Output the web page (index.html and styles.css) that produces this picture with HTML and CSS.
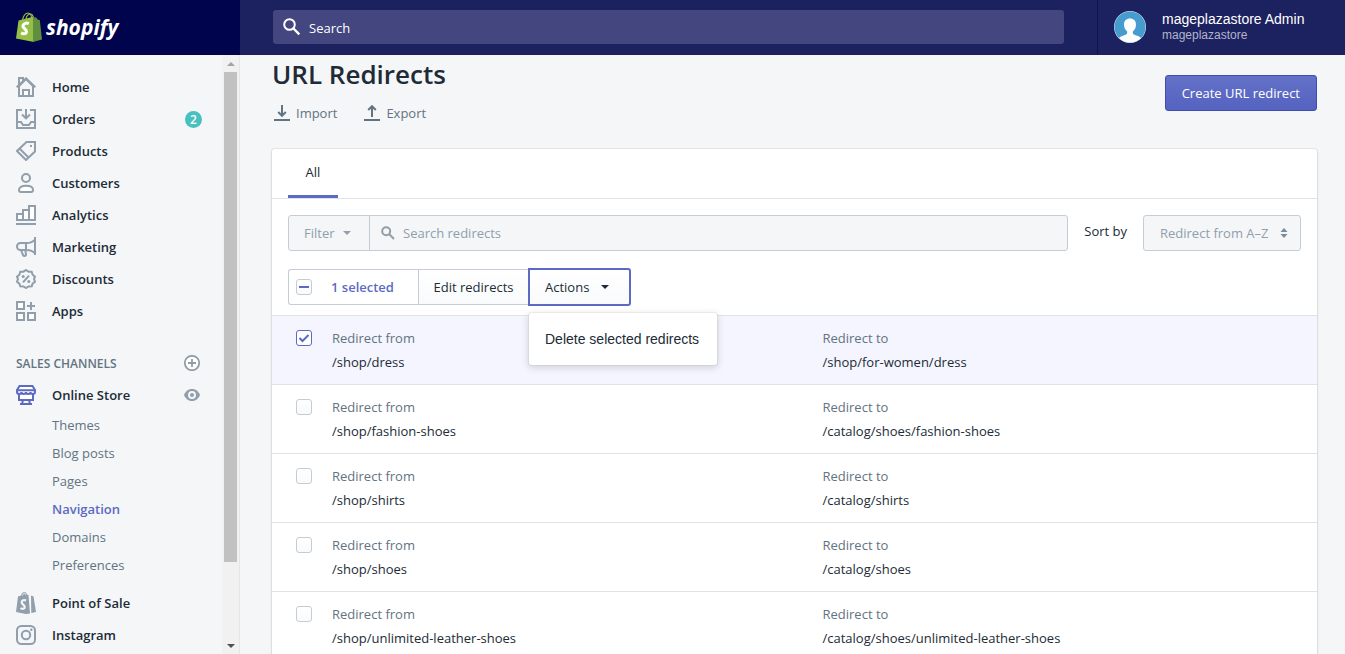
FILE: index.html
```html
<!DOCTYPE html>
<html lang="en">
<head>
<meta charset="utf-8">
<title>URL Redirects</title>
<link rel="stylesheet" href="styles.css">
</head>
<body>
<header class="topbar">
  <a class="brand" href="#">
    <svg class="brand-bag" viewBox="0 0 26 30" width="26" height="30" aria-hidden="true">
      <path d="M6.500 8C7 4 9.500 1 12 1c2.500 0 3.500 2.500 3.800 6M10 7c.5-3 2.500-5 4.500-5 1.500 0 2.500 1.500 3 4" fill="none" stroke="#95bf47" stroke-width="1.200"/>
      <path d="M2.500 8.500L18 4.500V30L0 26.500z" fill="#95bf47"/>
      <path d="M17 5l3 .5 2 2.200 1.800.3L26 27.500 17 30z" fill="#5e8e3e"/>
      <path d="M12.800 11.700c-1-.6-2.200-.8-3.400-.4-2.200.7-3 2.800-1.900 4.200.9 1.300 3 2 3 3.900 0 2.500-3.300 2.900-5.300 1.400" fill="none" stroke="#fff" stroke-width="3"/>
    </svg>
    <span class="brand-name">shopify</span>
  </a>
  <div class="search-wrap">
    <label class="search">
      <svg viewBox="0 0 18 18" width="18" height="18" aria-hidden="true"><g fill="none" stroke="#fff" stroke-width="2"><circle cx="6.500" cy="6.500" r="5.300"/><path d="M10.500 10.500l5.800 5.800" stroke-width="2.400"/></g></svg>
      <input type="search" placeholder="Search" aria-label="Search">
    </label>
  </div>
  <button class="user" type="button">
    <svg class="avatar" viewBox="0 0 32 32" width="32" height="32" aria-hidden="true">
      <defs><clipPath id="disc"><circle cx="16" cy="16" r="15.500"/></clipPath></defs>
      <circle cx="16" cy="16" r="16" fill="#d5e8f5"/>
      <g clip-path="url(#disc)"><path fill="#479ccf" d="M0 0h32v32H0z"/><path fill="#fff" d="M16 7.500c3.600 0 6 2.300 6 6 0 3.200-1.500 5.500-3.200 7-.3 2.300.6 3 3 3.800 2.700.9 4.400 1.600 5.500 3.200L24 32H8l-3.300-4.500c1.100-1.600 2.800-2.300 5.500-3.200 2.400-.8 3.300-1.500 3-3.800-1.700-1.500-3.200-3.800-3.200-7 0-3.700 2.400-6 6-6z"/></g>
    </svg>
    <span class="user-text"><span class="user-name">mageplazastore Admin</span><span class="user-store">mageplazastore</span></span>
  </button>
</header>

<div class="frame">
  <aside class="sidebar">
    <nav class="nav">
      <ul class="nav-list">
        <li><a class="nav-item" href="#"><svg class="icon" viewBox="0 0 20 20"><path d="M3 9L10 2l7 7v10H3z"/><path class="white" d="M7 19v-6h6v6z"/><path d="M.7 10.300L10 1.400l9.300 8.900M3 8V1h4v3"/></svg>Home</a></li>
        <li><a class="nav-item" href="#"><svg class="icon" viewBox="0 0 20 20"><path d="M6 1H1v18h18V1h-5M1 13h4l2 3h6l2-3h4M10 0v9M6 5.500L10 9.300l4-3.800"/></svg>Orders<span class="badge">2</span></a></li>
        <li><a class="nav-item" href="#"><svg class="icon" viewBox="0 0 20 20"><path d="M10.500 1H19v9.500L10 19l-9-9zM3.500 7.500l9 9"/><path class="solid" d="M14 4h2v2h-2z"/></svg>Products</a></li>
        <li><a class="nav-item" href="#"><svg class="icon" viewBox="0 0 20 20"><circle cx="10" cy="5" r="4"/><path class="white" d="M3 17c0-2.800 2.800-4.200 7-4.200s7 1.400 7 4.200c0 1.300-.8 2-2 2H5c-1.200 0-2-.7-2-2z"/></svg>Customers</a></li>
        <li><a class="nav-item" href="#"><svg class="icon" viewBox="0 0 20 20"><path class="white" d="M1 9h6v6H1zM7 5h6v10H7zM13 1h6v14h-6z"/><path d="M0 19h20"/></svg>Analytics</a></li>
        <li><a class="nav-item" href="#"><svg class="icon" viewBox="0 0 20 20"><path d="M19 0v18M19 2.500C17 5 14 6 10.500 6H4.500a3.500 3.500 0 000 7h6c3.500 0 6.500 1 8.500 3.500M10 6v7M5 13l2 5c.3.700.7 1 1.500 1 1 0 1.700-.7 1.500-1.800L9.300 13"/></svg>Marketing</a></li>
        <li><a class="nav-item" href="#"><svg class="icon" viewBox="0 0 20 20"><path d="M10 1l2.600 1.700 3.100.1.900 2.900 2.400 2-1 2.300 1 2.700-2.400 1.900-.9 2.700-3.100.2L10 19l-2.600-1.500-3.100-.2-.9-2.700L1 12.700 2 10 1 7.700l2.400-2 .9-2.900 3.100-.1zM7 13.300L13 6.700"/><circle class="solid" cx="7.200" cy="7.500" r="1.500"/><circle class="solid" cx="12.800" cy="12.500" r="1.500"/></svg>Discounts</a></li>
        <li><a class="nav-item" href="#"><svg class="icon" viewBox="0 0 20 20"><path class="white" d="M1 1h7v7H1zM1 12h7v7H1zM12 12h7v7h-7z"/><path d="M15 1v8M11 5h8"/></svg>Apps</a></li>
      </ul>
      <div class="nav-heading"><h2>SALES CHANNELS</h2>
        <button class="icon-button" type="button" aria-label="Add sales channel"><svg class="icon16" viewBox="0 0 16 16"><circle class="white" cx="8" cy="8" r="7.200"/><path d="M8 4v8M4 8h8"/></svg></button>
      </div>
      <ul class="nav-list">
        <li>
          <div class="nav-row"><a class="nav-item" href="#"><svg class="icon accent" viewBox="0 0 20 20"><path class="white" d="M3 8.500V15h14V8.500"/><path class="white" d="M3.500 1h13L19 5v2c0 1.300-1 2-2.200 2S14.500 8 14.500 7c0 1-1 2-2.200 2S10 8 10 7c0 1-1 2-2.300 2S5.500 8 5.500 7c0 1-1.100 2-2.300 2S1 8.300 1 7V5zM1 5.200h18M7 15l-1 4M13 15l1 4M4 19h12"/></svg>Online Store</a>
          <button class="icon-button" type="button" aria-label="View online store"><svg class="eye" viewBox="0 0 16 12"><path d="M8 0C4 0 1.200 2.700 0 6c1.200 3.300 4 6 8 6s6.800-2.700 8-6c-1.200-3.300-4-6-8-6z" fill="#919eab"/><circle cx="8" cy="6" r="3" fill="#919eab" stroke="#f4f6f8" stroke-width="2"/></svg></button></div>
          <ul class="subnav">
            <li><a href="#">Themes</a></li>
            <li><a href="#">Blog posts</a></li>
            <li><a href="#">Pages</a></li>
            <li><a class="current" href="#" aria-current="page">Navigation</a></li>
            <li><a href="#">Domains</a></li>
            <li><a href="#">Preferences</a></li>
          </ul>
        </li>
        <li><a class="nav-item" href="#"><svg class="icon pos" viewBox="0 0 20 22"><path d="M2 4.500l3-1C5.500 1.500 7 0 8.500 0 9.800 0 10.500 1 11 2.500l1.500.5L14 21.500 10 22 0 20zM15 3.500l2.500 1L20 20l-4.700 1z" fill="#919eab"/><path d="M10 8.500c-2-1-4.300-.3-4.300 1.700 0 2.300 3 2.500 3 4.800 0 2-2.700 2.300-4.200 1" fill="none" stroke="#f4f6f8" stroke-width="2.200"/><path d="M6.300 3.500C7 1.800 8 1.200 8.700 1.200c.6 0 .9.700 1 1.600" fill="none" stroke="#f4f6f8" stroke-width="1"/></svg>Point of Sale</a></li>
        <li><a class="nav-item" href="#"><svg class="icon" viewBox="0 0 20 20"><rect x="1" y="1" width="18" height="18" rx="4.500"/><circle cx="10" cy="10" r="4.200"/><circle class="solid" cx="15.300" cy="4.700" r="1.200"/></svg>Instagram</a></li>
      </ul>
    </nav>
    <div class="scrollbar" aria-hidden="true"><span class="arrow-up"></span><span class="thumb"></span><span class="arrow-down"></span></div>
  </aside>

  <main class="main">
    <div class="page-head">
      <div>
        <h1>URL Redirects</h1>
        <div class="page-links">
          <button type="button"><svg viewBox="0 0 16 16" width="16" height="16"><path d="M8 0v11M4.200 7L8 10.800 11.800 7M0 15h16"/></svg>Import</button>
          <button type="button"><svg viewBox="0 0 16 16" width="16" height="16"><path d="M8 12V1M4.200 5L8 1.200 11.800 5M0 15h16"/></svg>Export</button>
        </div>
      </div>
      <button class="primary" type="button">Create URL redirect</button>
    </div>

    <section class="card">
      <div class="tabs" role="tablist"><button class="tab" type="button" role="tab" aria-selected="true">All</button></div>
      <div class="filters">
        <div class="filter-group">
          <button class="filter" type="button">Filter<span class="caret"></span></button>
          <label class="filter-search">
            <svg viewBox="0 0 14 14" width="14" height="14"><g fill="none" stroke="#919eab" stroke-width="2"><circle cx="5.200" cy="5.200" r="4"/><path d="M8.300 8.300L13 13"/></g></svg>
            <input type="text" placeholder="Search redirects" aria-label="Search redirects">
          </label>
        </div>
        <label class="sort-label" for="sort">Sort by</label>
        <div class="sort"><select id="sort"><option>Redirect from A–Z</option></select><svg viewBox="0 0 8 10" width="8" height="10"><path d="M4 0l3.500 4h-7zM4 10L.5 6h7z" fill="#798c9c"/></svg></div>
      </div>
      <div class="bulk">
        <label class="bulk-count"><span class="check"><input type="checkbox"><svg viewBox="0 0 16 16"><path d="M3 8h10"/></svg></span>1 selected</label>
        <button class="bulk-edit" type="button">Edit redirects</button>
        <div class="actions">
          <button class="actions-button" type="button" aria-expanded="true">Actions<span class="caret"></span></button>
          <div class="menu"><button type="button">Delete selected redirects</button></div>
        </div>
      </div>
      <ul class="rows">
        <li class="row selected"><span class="check"><input type="checkbox" checked aria-label="Select /shop/dress"><svg viewBox="0 0 16 16"><path d="M3.500 8l3 3L12.500 5"/></svg></span><dl><div><dt>Redirect from</dt><dd>/shop/dress</dd></div><div><dt>Redirect to</dt><dd>/shop/for-women/dress</dd></div></dl></li>
        <li class="row"><span class="check"><input type="checkbox" aria-label="Select /shop/fashion-shoes"></span><dl><div><dt>Redirect from</dt><dd>/shop/fashion-shoes</dd></div><div><dt>Redirect to</dt><dd>/catalog/shoes/fashion-shoes</dd></div></dl></li>
        <li class="row"><span class="check"><input type="checkbox" aria-label="Select /shop/shirts"></span><dl><div><dt>Redirect from</dt><dd>/shop/shirts</dd></div><div><dt>Redirect to</dt><dd>/catalog/shirts</dd></div></dl></li>
        <li class="row"><span class="check"><input type="checkbox" aria-label="Select /shop/shoes"></span><dl><div><dt>Redirect from</dt><dd>/shop/shoes</dd></div><div><dt>Redirect to</dt><dd>/catalog/shoes</dd></div></dl></li>
        <li class="row"><span class="check"><input type="checkbox" aria-label="Select /shop/unlimited-leather-shoes"></span><dl><div><dt>Redirect from</dt><dd>/shop/unlimited-leather-shoes</dd></div><div><dt>Redirect to</dt><dd>/catalog/shoes/unlimited-leather-shoes</dd></div></dl></li>
      </ul>
    </section>
  </main>
</div>
</body>
</html>
```
FILE: styles.css
```css
*, *::before, *::after { box-sizing: border-box; }
body {
  margin: 0;
  height: 100vh;
  display: flex;
  flex-direction: column;
  overflow: hidden;
  background: #f4f6f8;
  color: #212b36;
  font: 13px/24px "Open Sans", "Noto Sans", sans-serif;
}
button, input, select { font: inherit; color: inherit; margin: 0; }
button { padding: 0; border: 0; background: none; cursor: pointer; }
a { color: inherit; text-decoration: none; }
ul { list-style: none; margin: 0; padding: 0; }
h1, h2, dl, dd { margin: 0; }
svg { flex: none; display: block; }

/* Top bar */
.topbar { flex: none; display: flex; height: 55px; background: #1c2260; color: #fff; }
.brand { width: 240px; display: flex; align-items: center; gap: 4px; padding: 0 0 1px 16px; background: #00044c; }
.brand-name { font-size: 21px; font-weight: 700; font-style: italic; }
.search-wrap { flex: 1; padding: 10px 33px; }
.search { display: flex; align-items: center; gap: 8px; height: 34px; padding: 0 10px; border-radius: 3px; background: #43467f; }
.search input { flex: 1; min-width: 0; border: 0; padding: 1px 0 0; outline: 0; background: none; appearance: none; }
.search input::placeholder { color: #fff; opacity: 1; }
.user { width: 248px; display: flex; align-items: center; gap: 16px; padding: 0 0 2px 16px; border-left: 1px solid #0f1447; text-align: left; font-family: "Liberation Sans", Arial, sans-serif; }
.user-text { display: flex; flex-direction: column; }
.user-name { font-size: 14px; line-height: 16px; }
.user-store { font-size: 12px; line-height: 16px; color: #b3b5cb; }

/* Sidebar */
.frame { flex: 1; min-height: 0; display: flex; }
.sidebar { flex: none; width: 240px; display: flex; border-right: 1px solid #e3e6ea; overflow: hidden; }
.nav { flex: 1; padding-top: 16px; }
.nav-item { flex: 1; display: flex; align-items: center; gap: 16px; height: 32px; padding: 0 20px 0 16px; font-weight: 600; }
.icon { width: 20px; height: 20px; fill: none; stroke: #919eab; stroke-width: 2; }
.icon.pos { height: 22px; stroke: none; }
.icon.accent { stroke: #5c6ac4; }
.icon .white, .icon16 .white { fill: #fff; }
.icon .solid { fill: #919eab; stroke: none; }
.icon16 { width: 16px; height: 16px; fill: none; stroke: #919eab; stroke-width: 1.8; }
.eye { width: 16px; height: 12px; }
.badge { margin-left: auto; min-width: 17px; height: 17px; border-radius: 9px; background: #47c1bf; color: #fff; font-size: 12px; line-height: 17px; font-weight: 600; text-align: center; }
.nav-heading { display: flex; align-items: center; justify-content: space-between; height: 32px; margin-top: 20px; padding: 0 22px 0 16px; }
.nav-heading h2 { padding-top: 1px; font-size: 12px; font-weight: 600; color: #637381; }
.nav-row { display: flex; align-items: center; padding-right: 22px; }
.subnav { padding: 0 0 8px 52px; color: #637381; }
.subnav a { display: block; line-height: 28px; }
.subnav .current { color: #5c6ac4; font-weight: 600; }
.scrollbar { flex: none; width: 17px; display: flex; flex-direction: column; align-items: center; padding: 7px 0 6px; background: #f1f1f1; }
.arrow-up, .arrow-down { border: 4px solid transparent; }
.arrow-up { border-top: 0; border-bottom-color: #a3a3a3; }
.arrow-down { border-bottom: 0; border-top-color: #505050; }
.thumb { width: 13px; flex: 1; margin: 6px 0 82px; background: #c1c1c1; }

/* Page */
.main { flex: 1; min-width: 0; padding: 0 28px 0 32px; }
.page-head { display: flex; justify-content: space-between; align-items: flex-start; padding-bottom: 24px; }
h1 { font-size: 26px; line-height: 38px; font-weight: 600; }
.page-links { display: flex; gap: 27px; padding: 8px 2px 0; color: #637381; }
.page-links button { display: flex; align-items: center; gap: 6px; line-height: 24px; }
.page-links svg { fill: none; stroke: #637381; stroke-width: 2; }
.primary { margin-top: 20px; height: 36px; padding: 0 16px; border: 1px solid #3f4eae; border-radius: 3px; background: linear-gradient(#6371c7, #5563c1); color: #fff; }
.card { border-radius: 3px; background: #fff; box-shadow: 0 0 0 1px rgba(63, 63, 68, .08), 0 1px 3px rgba(63, 63, 68, .15); }
.tabs { display: flex; height: 50px; padding: 0 16px; border-bottom: 1px solid #dfe3e8; }
.tab { min-width: 50px; padding-bottom: 1px; border-bottom: 3px solid #5c6ac4; }
.filters { display: flex; padding: 16px 16px 0; }
.filter-group { flex: 1; display: flex; height: 36px; border: 1px solid #c4cdd5; border-radius: 3px; background: #f4f6f8; color: #919eab; }
.filter { display: flex; align-items: center; gap: 8px; width: 81px; padding-left: 15px; border-right: 1px solid #c4cdd5; }
.caret { border: 4px solid transparent; border-top-color: currentColor; border-bottom: 0; }
.filter-search { flex: 1; display: flex; align-items: center; gap: 8px; padding-left: 11px; }
.filter-search input { flex: 1; border: 0; padding: 0; background: none; outline: 0; }
.filter-search input::placeholder { color: #919eab; opacity: 1; }
.sort-label { padding: 4px 16px; }
.sort { position: relative; width: 158px; }
.sort select { appearance: none; width: 100%; height: 36px; padding: 0 16px; border: 1px solid #c4cdd5; border-radius: 3px; background: #f4f6f8; color: #919eab; }
.sort svg { position: absolute; right: 13px; top: 13px; pointer-events: none; }
.bulk { display: flex; align-items: center; padding: 17px 16px 9px; }
.bulk-count, .bulk-edit { height: 36px; border: 1px solid #c4cdd5; border-right: 0; }
.bulk-count { display: flex; align-items: center; gap: 19px; width: 130px; padding-left: 7px; border-radius: 3px 0 0 3px; color: #5c6ac4; font-weight: 600; }
.bulk-edit { width: 110px; background: linear-gradient(#fff, #f9fafb); }
.actions { position: relative; }
.actions-button { display: flex; align-items: center; gap: 12px; width: 103px; height: 38px; padding-left: 15px; border: 2px solid #5c6ac4; border-radius: 0 3px 3px 0; background: linear-gradient(#fff, #f9fafb); }
.menu { position: absolute; z-index: 1; top: 45px; left: 1px; padding: 8px 0; border-radius: 3px; background: #fff; box-shadow: 0 0 0 1px rgba(39, 44, 48, .05), 0 2px 7px 1px rgba(39, 44, 48, .16); }
.menu button { height: 36px; padding: 0 18px 0 16px; white-space: nowrap; font: 14px/20px "Liberation Sans", Arial, sans-serif; }

.check { flex: none; position: relative; width: 16px; height: 16px; }
.check input { display: block; appearance: none; width: 16px; height: 16px; border: 1px solid #c4cdd5; border-radius: 3px; background: linear-gradient(#fff, #f9fafb); }
.check input:checked { border-color: #5c6ac4; background: #fff; }
.check svg { position: absolute; inset: 0; pointer-events: none; fill: none; stroke: #5c6ac4; stroke-width: 2; }
.row { display: flex; gap: 20px; padding: 10px 16px 10px 24px; border-top: 1px solid #dfe3e8; }
.row .check { margin-top: 4px; }
.row.selected { background: #f4f5fe; }
.row dl { flex: 1; display: grid; grid-template-columns: 1fr 1fr; gap: 12px; }
.row dt { color: #637381; }
```
